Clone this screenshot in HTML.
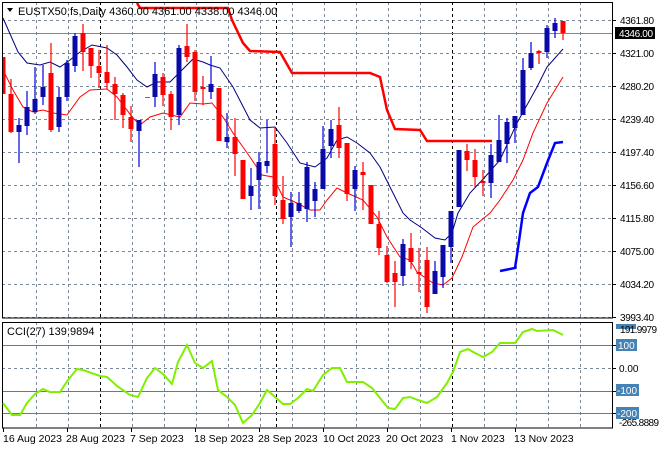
<!DOCTYPE html>
<html><head><meta charset="utf-8"><style>
html,body{margin:0;padding:0;background:#fff;}
svg{display:block;font-family:"Liberation Sans",sans-serif;}
</style></head><body>
<svg width="660" height="450" viewBox="0 0 660 450" xmlns="http://www.w3.org/2000/svg">
<rect width="660" height="450" fill="#fff"/>
<g stroke="#7a8898" stroke-width="1" stroke-dasharray="3,3">
<path d="M2 20.5H613M2 53.5H613M2 86.5H613M2 119.5H613M2 152.5H613M2 185.5H613M2 218.5H613M2 251.5H613M2 284.5H613M2 317.5H613"/>
<path d="M36.5 2V318M68.5 2V318M132.5 2V318M164.5 2V318M196.5 2V318M228.5 2V318M260.5 2V318M292.5 2V318M324.5 2V318M356.5 2V318M388.5 2V318M420.5 2V318M484.5 2V318M516.5 2V318M548.5 2V318M580.5 2V318"/>
<path d="M36.5 322V428M68.5 322V428M132.5 322V428M164.5 322V428M196.5 322V428M228.5 322V428M260.5 322V428M292.5 322V428M324.5 322V428M356.5 322V428M388.5 322V428M420.5 322V428M484.5 322V428M516.5 322V428M548.5 322V428M580.5 322V428M2 368.5H613"/>
</g>
<g stroke="#000" stroke-width="1" stroke-dasharray="3,3">
<path d="M100.5 2V318M276.5 2V318M452.5 2V318M100.5 322V428M276.5 322V428M452.5 322V428"/>
</g>
<path d="M2 33.5H613" stroke="#7a8898" stroke-width="1"/>
<polyline fill="none" stroke="#f00" stroke-width="2.5" points="137,3 140,8 228,8 232,20 243,43 250,51 280,52 292,73 370,73 380,77 387,110 395,129 420,130 427,141 492,141"/>
<polyline fill="none" stroke="#0000ff" stroke-width="2.5" points="500,271 515,268 517,255 523,213 530,193 538,187 547,163 555,143 563,142"/>
<polyline fill="none" stroke="#000080" stroke-width="1" points="3,18 18,52 27,63 40,65 50,62 60,67 70,60 80,52 92,45 107,48 117,55 127,67 137,80 147,87 157,82 170,82 180,72 193,59 203,62 210,65 220,68 233,87 250,120 260,128 275,127 287,143 300,163 315,167 327,158 337,140 347,137 357,143 370,153 380,167 393,193 403,213 410,220 422,228 435,238 445,240 452,233 458,213 470,193 485,177 500,160 517,123 527,105 537,87 547,67 563,49"/>
<polyline fill="none" stroke="#f00" stroke-width="1" points="3,70 13,90 23,107 33,112 43,110 53,113 67,115 80,97 90,90 107,89 117,97 133,118 140,125 150,117 163,113 180,117 190,103 203,104 212,103 223,117 233,133 250,157 262,175 273,177 283,197 297,203 310,210 320,210 327,200 337,188 347,193 363,200 377,217 387,237 400,257 410,260 417,272 433,283 443,285 452,278 462,257 473,227 490,213 500,200 513,180 523,160 533,133 547,103 563,77"/>
<g>
<g stroke="#0000e0" stroke-width="1.2">
<path d="M19 118V163M27 91V135M35 67V114M43 65V105M59 87V132M67 60V101M75 33V72M139 120V167M155 62V107M179 45V125M211 56V99M227 113V148M251 168V210M259 152V209M267 120V173M291 192V247M299 192V213M307 162V222M315 182V217M323 126V189M331 120V158M355 166V211M403 239V286M435 261V294M443 245V288M451 211V263M459 150V207M491 144V198M499 115V162M507 118V163M515 116V143M523 58V115M531 42V70M547 25V58M555 18V38"/>
</g>
<g fill="#0a0aa8">
<rect x="16.5" y="125" width="5" height="7"/><rect x="24.5" y="107" width="5" height="19"/><rect x="32.5" y="99" width="5" height="13"/><rect x="40.5" y="87" width="5" height="10"/><rect x="56.5" y="97" width="5" height="30"/><rect x="64.5" y="63" width="5" height="34"/><rect x="72.5" y="36" width="5" height="30"/><rect x="136.5" y="120" width="5" height="11"/><rect x="152.5" y="74" width="5" height="23"/><rect x="176.5" y="48" width="5" height="67"/><rect x="208.5" y="84" width="5" height="8"/><rect x="224.5" y="137" width="5" height="5"/><rect x="248.5" y="186" width="5" height="10"/><rect x="256.5" y="162" width="5" height="18"/><rect x="264.5" y="161" width="5" height="5"/><rect x="288.5" y="203" width="5" height="14"/><rect x="296.5" y="203" width="5" height="8"/><rect x="304.5" y="167" width="5" height="42"/><rect x="312.5" y="189" width="5" height="12"/><rect x="320.5" y="149" width="5" height="40"/><rect x="328.5" y="129" width="5" height="17"/><rect x="352.5" y="170" width="5" height="19"/><rect x="400.5" y="244" width="5" height="32"/><rect x="432.5" y="271" width="5" height="23"/><rect x="440.5" y="245" width="5" height="32"/><rect x="448.5" y="211" width="5" height="36"/><rect x="456.5" y="150" width="5" height="57"/><rect x="488.5" y="155" width="5" height="28"/><rect x="496.5" y="140" width="5" height="22"/><rect x="504.5" y="122" width="5" height="22"/><rect x="512.5" y="116" width="5" height="12"/><rect x="520.5" y="70" width="5" height="45"/><rect x="528.5" y="53" width="5" height="15"/><rect x="544.5" y="28" width="5" height="24"/><rect x="552.5" y="23" width="5" height="8"/>
</g>
<g stroke="#f00" stroke-width="1.2">
<path d="M11 79V133M51 43V132M83 24V71M91 48V78M99 50V88M107 45V89M115 77V120M123 93V128M131 106V142M163 73V106M171 91V130M187 24V62M195 50V101M203 76V105M219 88V141M235 118V176M243 160V199M275 128V205M283 176V224M339 107V158M347 143V201M363 162V210M371 185V224M379 211V255M387 246V283M395 261V307M411 233V269M419 248V292M427 247V313M467 144V171M475 149V187M483 170V196M539 50V64M563 21V40"/>
</g>
<g fill="#f00">
<rect x="2" y="57" width="3.5" height="37"/><rect x="8.5" y="94" width="5" height="38"/><rect x="48.5" y="73" width="5" height="57"/><rect x="80.5" y="33" width="5" height="19"/><rect x="88.5" y="48" width="5" height="18"/><rect x="96.5" y="66" width="5" height="7"/><rect x="104.5" y="72" width="5" height="11"/><rect x="112.5" y="84" width="5" height="10"/><rect x="120.5" y="95" width="5" height="20"/><rect x="128.5" y="117" width="5" height="12"/><rect x="160.5" y="77" width="5" height="18"/><rect x="168.5" y="94" width="5" height="23"/><rect x="184.5" y="46" width="5" height="11"/><rect x="192.5" y="52" width="5" height="40"/><rect x="200.5" y="87" width="5" height="2"/><rect x="216.5" y="88" width="5" height="53"/><rect x="232.5" y="137" width="5" height="17"/><rect x="240.5" y="160" width="5" height="39"/><rect x="272.5" y="144" width="5" height="52"/><rect x="280.5" y="200" width="5" height="19"/><rect x="336.5" y="125" width="5" height="23"/><rect x="344.5" y="143" width="5" height="51"/><rect x="360.5" y="172" width="5" height="3"/><rect x="368.5" y="185" width="5" height="39"/><rect x="376.5" y="224" width="5" height="24"/><rect x="384.5" y="255" width="5" height="27"/><rect x="392.5" y="273" width="5" height="9"/><rect x="408.5" y="248" width="5" height="14"/><rect x="416.5" y="272" width="5" height="2"/><rect x="424.5" y="260" width="5" height="47"/><rect x="464.5" y="151" width="5" height="9"/><rect x="472.5" y="160" width="5" height="17"/><rect x="480.5" y="181" width="5" height="2"/><rect x="536.5" y="51" width="5" height="2"/><rect x="560.5" y="21" width="5" height="12"/>
</g>
<path d="M145 97.5H150" stroke="#00c000" stroke-width="1"/>
</g>
<rect x="2.5" y="2.5" width="610" height="315.5" fill="none" stroke="#000" stroke-width="1"/>
<rect x="2.5" y="322.5" width="610" height="105.5" fill="none" stroke="#000" stroke-width="1"/>
<path d="M3 345.5H612M3 391.5H612M3 413.5H612" stroke="#4682b4" stroke-width="1"/>
<polyline fill="none" stroke="#80f000" stroke-width="2" points="3,403 12,415 20,415 27,403 35,394 43,389 50,392 60,392 68,380 77,369 83,370 100,376 107,377 117,386 130,395 138,397 147,378 155,368 163,374 172,384 178,362 187,345 195,363 203,368 212,361 218,390 227,397 235,405 243,423 252,415 260,403 267,390 275,397 283,404 290,404 298,398 307,389 313,391 323,375 332,368 340,368 347,382 363,382 372,388 380,398 388,408 395,409 403,398 410,397 418,400 427,403 437,397 447,383 453,372 460,352 468,349 475,353 483,357 492,352 500,343 515,343 523,332 532,329 537,331 553,330 563,335"/>
<path d="M7 8H13L10 12Z" fill="#000"/>
<text x="18" y="15" font-size="11" fill="#000">EUSTX50.fs,Daily  4360.00 4361.00 4338.00 4346.00</text>
<text x="7" y="335" font-size="11" fill="#000">CCI(27) 139.9894</text>
<g font-size="10" fill="#000">
<text x="620" y="24" textLength="34">4361.80</text>
<rect x="615" y="27" width="40" height="12" fill="#000"/>
<text x="619" y="37" fill="#fff" textLength="34">4346.00</text>
<text x="620" y="57" textLength="34">4321.00</text>
<text x="620" y="90" textLength="34">4280.20</text>
<text x="620" y="123" textLength="34">4239.40</text>
<text x="620" y="156" textLength="34">4197.40</text>
<text x="620" y="189" textLength="34">4156.60</text>
<text x="620" y="222" textLength="34">4115.80</text>
<text x="620" y="255" textLength="34">4075.00</text>
<text x="620" y="288" textLength="34">4034.20</text>
<text x="620" y="321" textLength="34">3993.40</text>
<rect x="616" y="324" width="20" height="5" fill="#4682b4"/>
<text x="620" y="333" textLength="37">191.9979</text>
<rect x="616" y="339" width="21" height="12" fill="#4682b4"/>
<text x="618" y="349" fill="#fff">100</text>
<text x="619" y="372">0.00</text>
<rect x="616" y="384" width="23" height="12" fill="#4682b4"/>
<text x="617" y="394" fill="#fff">-100</text>
<rect x="616" y="407" width="23" height="12" fill="#4682b4"/>
<text x="617" y="417" fill="#fff">-200</text>
<text x="619" y="426" textLength="40">-265.8889</text>
</g>
<path d="M613 20.5h3M613 53.5h3M613 86.5h3M613 119.5h3M613 152.5h3M613 185.5h3M613 218.5h3M613 251.5h3M613 284.5h3M613 317.5h3M613 345.5h3M613 368.5h3M613 391.5h3M613 413.5h3" stroke="#000"/>
<g font-size="10.5" fill="#000">
<text x="3" y="442">16 Aug 2023</text>
<text x="66" y="442">28 Aug 2023</text>
<text x="130" y="442">7 Sep 2023</text>
<text x="194" y="442">18 Sep 2023</text>
<text x="258" y="442">28 Sep 2023</text>
<text x="323" y="442">10 Oct 2023</text>
<text x="386" y="442">20 Oct 2023</text>
<text x="451" y="442">1 Nov 2023</text>
<text x="514" y="442">13 Nov 2023</text>
</g>
<path d="M3.5 428v4M67.5 428v4M131.5 428v4M195.5 428v4M259.5 428v4M323.5 428v4M387.5 428v4M451.5 428v4M515.5 428v4" stroke="#000"/>
</svg>
</body></html>
